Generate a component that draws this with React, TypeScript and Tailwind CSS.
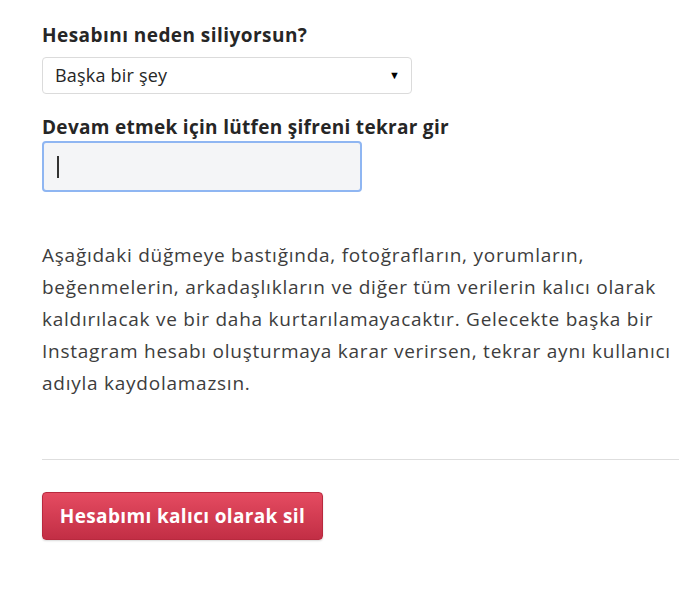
export default function App() {
  return (
    <div className="w-[698px] h-[597px] bg-white" style={{ fontFamily: '"Open Sans", Arial, sans-serif' }}>
      <div className="pl-[42px] pr-[19px] pt-[24px]">
        <label className="block text-[19px] leading-[22px] font-bold text-[#262626] tracking-[0.45px]">Hesabını neden siliyorsun?</label>
        <div className="mt-[11px] w-[370px] h-[37px] border border-[#dbdbdb] rounded-[4px] flex items-center justify-between pl-[12px] pr-[11px] bg-white">
          <span className="text-[18px] text-[#262626] tracking-[0.2px]">Başka bir şey</span>
          <span className="text-[11px] text-black">▼</span>
        </div>
        <label className="block mt-[22px] text-[19px] leading-[22px] font-bold text-[#262626] tracking-[0.3px]">Devam etmek için lütfen şifreni tekrar gir</label>
        <div className="mt-[3px] w-[320px] h-[51px] border-2 border-[#8fb6f2] rounded-[4px] bg-[#f4f5f7] flex items-center pl-[13px]">
          <div className="w-[2px] h-[22px] bg-[#333]" />
        </div>
        <p className="mt-[47px] text-[19px] leading-[32px] text-[#3d3d3d] tracking-[0.75px]">
          Aşağıdaki düğmeye bastığında, fotoğrafların, yorumların,<br />
          beğenmelerin, arkadaşlıkların ve diğer tüm verilerin kalıcı olarak<br />
          kaldırılacak ve bir daha kurtarılamayacaktır. Gelecekte başka bir<br />
          Instagram hesabı oluşturmaya karar verirsen, tekrar aynı kullanıcı<br />
          adıyla kaydolamazsın.
        </p>
        <div className="mt-[60px] h-px bg-[#dedede]" />
        <button className="mt-[32px] w-[281px] h-[48px] rounded-[4px] border border-[#b8293e] bg-gradient-to-b from-[#e54b61] to-[#c22e45] text-white text-[19px] font-bold tracking-[0.35px] shadow-[0_1px_2px_rgba(0,0,0,0.15)]">
          Hesabımı kalıcı olarak sil
        </button>
      </div>
    </div>
  );
}
